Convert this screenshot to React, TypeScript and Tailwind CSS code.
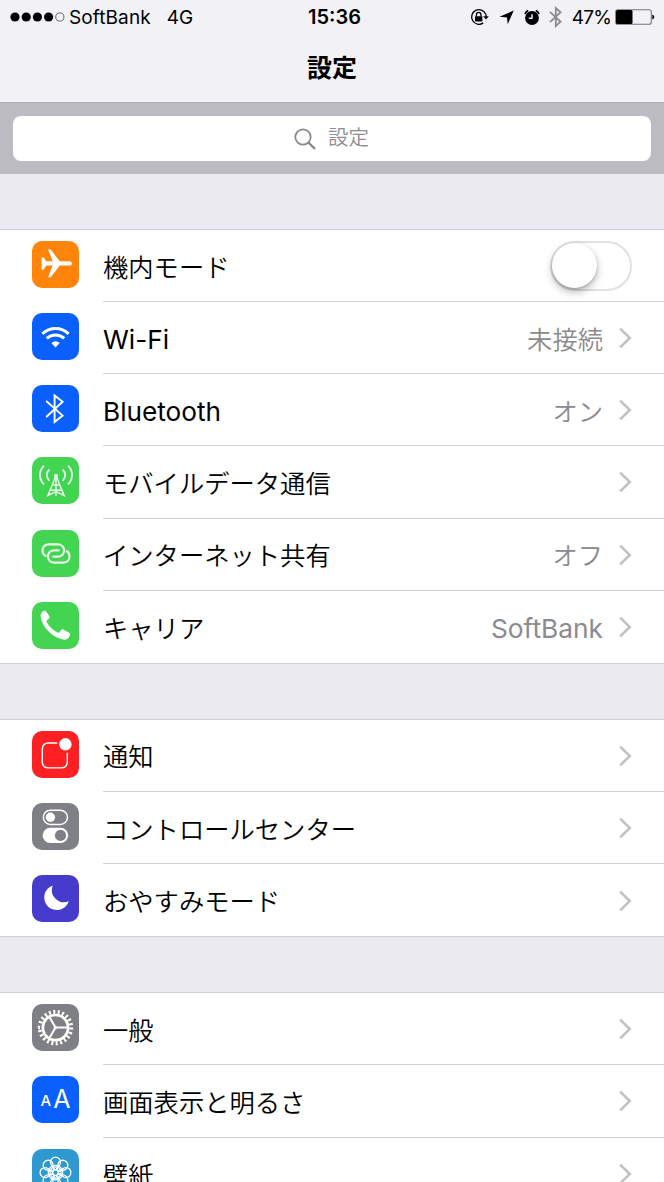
import type { ReactNode } from 'react'

interface SettingsItem {
  label: string
  color: string
  icon: ReactNode
  value?: string
  latin?: boolean
  toggle?: boolean
}

const PlaneIcon = () => (
  <path
    fill="#fff"
    d="M37.3 20.2c1.6 0 2.6 1 2.6 2.2s-1 2.2-2.6 2.2H27.8L18.7 36.2H16l4.8-11.6h-6.6l-2.6 4.2H9.6V16.2h2l2.6 4h6.6L16 8.5h2.7l9.1 11.7z"
  />
)

const WifiIcon = () => (
  <g fill="none" stroke="#fff" strokeWidth="3">
    <path d="M10.4 20.8a19 19 0 0 1 26.2 0" />
    <path d="M14.8 25.4a12.6 12.6 0 0 1 17.4 0" />
    <path d="M23.5 34.4l-4.2-4.5a6.1 6.1 0 0 1 8.4 0z" fill="#fff" stroke="none" />
  </g>
)

const BluetoothTileIcon = () => (
  <path d="M14.2 16l16.4 14.6-8 6.4V10.4l8 6.4-16.4 15.2" fill="none" stroke="#fff" strokeWidth="1.9" />
)

const CellularIcon = () => (
  <g fill="none" stroke="#fff" strokeWidth="1.4" opacity="0.9">
    <path d="M12 8.7C6.6 14 6.6 22.2 12 27.4M36 8.7c5.4 5.3 5.4 13.5 0 18.7" strokeWidth="1.8" />
    <path d="M17.5 12.4c-3.6 3.2-3.6 8.2 0 11.4M30.5 12.4c3.6 3.2 3.6 8.2 0 11.4" strokeWidth="1.8" />
    <path d="M24 18.5L15.8 39M24 18.5L32.2 39M24 18v21M20.3 28h7.4M18 33.3h12M18 33.3l-2.2 5.2 8.2-3.8 8.2 3.8-2.2-5.2" />
    <circle cx="24" cy="18.7" r="2" fill="#fff" stroke="none" />
  </g>
)

const HotspotIcon = () => (
  <g fill="none" stroke="#fff" strokeWidth="2.2" strokeLinecap="round" opacity="0.88">
    <path d="M13.6 26c-2-.9-3.1-3-3.1-5.4 0-3.6 2.5-6.2 6.3-6.2h8.8c3.8 0 6.4 2.5 6.4 6.1s-2.6 6.2-6.4 6.2h-4.4" />
    <path d="M34.4 21.1c2 .9 3.1 3 3.1 5.4 0 3.6-2.5 6.2-6.3 6.2h-8.8c-3.8 0-6.4-2.5-6.4-6.1s2.6-6.2 6.4-6.2h4.4" />
  </g>
)

const PhoneIcon = () => (
  <path
    fill="#fff"
    d="M10 10.2c1.5-1.5 3.3-2 4.2-.8l3 4.6c.7 1.2.4 2.2-.6 3l-1.700 1.300c-.5.5-.5 1.100-.1 1.900 2.600 4.400 6.400 8 10.700 10.200.9.400 1.500.3 2-.3l1.400-1.900c.7-.9 1.700-1.100 2.800-.5l5.500 3c1.300.8 1.200 2.300.1 4.100-1.300 2.200-3.400 3.300-6.300 2.800C20 35.300 10 24.500 8.700 15c-.3-2 .2-3.600 1.300-4.800z"
  />
)

const NotificationIcon = () => (
  <>
    <path
      d="M25.3 12H16.6c-4 0-6.3 2.3-6.3 6.3v12.3c0 4 2.3 6.3 6.3 6.3H29c4 0 6.3-2.3 6.3-6.3v-8.9"
      fill="none"
      stroke="#fff"
      strokeWidth="1.4"
    />
    <circle cx="33.4" cy="13.3" r="6.2" fill="#fff" />
  </>
)

const ControlCenterIcon = () => (
  <>
    <rect x="11.3" y="7.2" width="24.2" height="14.2" rx="7.1" fill="none" stroke="#fff" strokeWidth="1.5" />
    <circle cx="18.4" cy="14.3" r="4.7" fill="#fff" />
    <rect x="10.6" y="24.7" width="25.6" height="15.4" rx="7.7" fill="#fff" />
    <circle cx="28.5" cy="32.4" r="5.6" fill="#7f7f86" />
  </>
)

const MoonIcon = () => <path fill="#fff" d="M20.7 10.5A12.6 12.6 0 1 0 36.8 26.3A12.3 12.3 0 0 1 20.7 10.5z" />

const GearIcon = () => (
  <g fill="none" stroke="#fff">
    <circle cx="23.5" cy="23.6" r="12.6" strokeWidth="2.7" />
    <circle cx="23.5" cy="23.6" r="15.6" strokeWidth="4.2" pathLength="44" strokeDasharray="0.9 1.1" />
    <path d="M23.5 23.6H36M23.5 23.6L17.2 12.7M23.5 23.6L17.2 34.5" strokeWidth="2" />
    <circle cx="23.5" cy="23.6" r="1.8" fill="#fff" stroke="none" />
  </g>
)

const BrightnessIcon = () => (
  <div className="flex h-full items-baseline justify-center gap-[2px] font-['Inter'] leading-[46px] text-white">
    <span className="relative -top-[2px] text-[15px] font-medium">A</span>
    <span className="text-[25px]">A</span>
  </div>
)

const WallpaperIcon = () => (
  <g fill="none" stroke="#fff" strokeWidth="1.3">
    {[0, 45, 90, 135, 180, 225, 270, 315].map((angle) => (
      <g key={angle} transform={`rotate(${angle} 23.5 23.6)`}>
        <circle cx="23.5" cy="13.2" r="5" />
        <circle cx="23.5" cy="18.6" r="2.3" strokeWidth="1.1" />
      </g>
    ))}
    <circle cx="23.5" cy="23.6" r="3" />
  </g>
)

const groups: SettingsItem[][] = [
  [
    { label: '機内モード', color: 'bg-[#ff8408]', icon: <PlaneIcon />, toggle: true },
    { label: 'Wi-Fi', color: 'bg-[#0a60ff]', icon: <WifiIcon />, value: '未接続', latin: true },
    { label: 'Bluetooth', color: 'bg-[#0a60ff]', icon: <BluetoothTileIcon />, value: 'オン', latin: true },
    { label: 'モバイルデータ通信', color: 'bg-[#43d551]', icon: <CellularIcon /> },
    { label: 'インターネット共有', color: 'bg-[#43d551]', icon: <HotspotIcon />, value: 'オフ' },
    { label: 'キャリア', color: 'bg-[#43d551]', icon: <PhoneIcon />, value: 'SoftBank' },
  ],
  [
    { label: '通知', color: 'bg-[#ff2024]', icon: <NotificationIcon /> },
    { label: 'コントロールセンター', color: 'bg-[#7f7f86]', icon: <ControlCenterIcon /> },
    { label: 'おやすみモード', color: 'bg-[#473bcd]', icon: <MoonIcon /> },
  ],
  [
    { label: '一般', color: 'bg-[#7f7f86]', icon: <GearIcon /> },
    { label: '画面表示と明るさ', color: 'bg-[#0a60ff]', icon: null },
    { label: '壁紙', color: 'bg-[#2f98d0]', icon: <WallpaperIcon /> },
  ],
]

const StatusBar = () => (
  <div className="grid h-[34px] grid-cols-[1fr_auto_1fr] items-center text-[19px] leading-none">
    <div className="flex items-center pl-[10px]">
      <svg width="56" height="10" viewBox="0 0 56 10">
        {[5, 16.2, 27.4, 38.6].map((cx) => (
          <circle key={cx} cx={cx} cy="5" r="4.6" />
        ))}
        <circle cx="49.8" cy="5" r="4.1" fill="none" stroke="#555" strokeWidth="0.9" />
      </svg>
      <span className="ml-[3px] tracking-[0.1px]">SoftBank</span>
      <span className="ml-[16px]">4G</span>
    </div>
    <span className="pl-[5px] text-[20px] font-semibold">15:36</span>
    <div className="flex items-center justify-end pr-[9px]">
      <svg width="19" height="18" viewBox="0 0 19 18">
        <path d="M15.7 6.2A7.3 7.3 0 1 0 13.2 14.9" fill="none" stroke="#000" strokeWidth="1.3" />
        <path d="M15.7 6.2q.5 1.2.5 2.6" fill="none" stroke="#000" strokeWidth="1.3" />
        <path d="M13.2 8.3h5.6L16 11.6z" />
        <rect x="5" y="8.2" width="7.4" height="5.2" rx="0.6" />
        <path d="M6.4 8.5V6.7a2.3 2.3 0 0 1 4.6 0v1.8" fill="none" stroke="#000" strokeWidth="1.3" />
      </svg>
      <svg className="ml-[10px]" width="15" height="15" viewBox="0 0 15 15">
        <path d="M14.7.5L8.7 14.3 8 7.5.5 6.8z" />
      </svg>
      <svg className="ml-[10px]" width="16" height="17" viewBox="0 0 16 17">
        <circle cx="8" cy="9" r="6.9" />
        <path d="M.9 4.8A8.6 8.6 0 0 1 4.2 1.5M15.1 4.8a8.6 8.6 0 0 0-3.3-3.3" fill="none" stroke="#000" strokeWidth="1.7" />
        <path d="M8 5.2v4.1H4.8" fill="none" stroke="#f2f1f6" strokeWidth="1.4" />
      </svg>
      <svg className="ml-[9px]" width="14" height="22" viewBox="0 0 14 22">
        <path d="M1 5.8l10.6 10L6.8 20V2l4.8 4.2L1 16.2" fill="none" stroke="#8b8b90" strokeWidth="1.8" />
      </svg>
      <span className="ml-[9px] tracking-[-0.8px]">47%</span>
      <svg className="ml-[4px]" width="40" height="16" viewBox="0 0 40 16">
        <rect x="0.7" y="0.7" width="35.6" height="14.6" rx="2" fill="none" stroke="#77777b" strokeWidth="1.1" />
        <rect x="1" y="1" width="16.5" height="14" rx="1.5" />
        <path d="M37.3 5.5q2 .6 2 2.5t-2 2.5z" />
      </svg>
    </div>
  </div>
)

const Toggle = () => (
  <div className="mr-8 h-[50px] w-[82px] rounded-full border-[2.5px] border-[#e1e1e4] bg-white">
    <div className="h-[45px] w-[45px] rounded-full bg-white shadow-[0_4px_8px_rgba(0,0,0,0.28),0_1px_2px_rgba(0,0,0,0.22)]" />
  </div>
)

const Chevron = () => (
  <svg className="mt-px mr-8 ml-4" width="13" height="22" viewBox="0 0 13 22">
    <path d="M1.2 1.7L10.8 11 1.2 20.3" fill="none" stroke="#c0c0c5" strokeWidth="2.5" />
  </svg>
)

const SettingsRow = ({ item, last }: { item: SettingsItem; last: boolean }) => (
  <div className="flex h-[72.15px] pl-8">
    <div className={`mt-[11px] h-[47px] w-[47px] shrink-0 overflow-hidden rounded-[10px] ${item.color}`}>
      {item.icon ? (
        <svg width="47" height="47" viewBox="0 0 47 47">
          {item.icon}
        </svg>
      ) : (
        <BrightnessIcon />
      )}
    </div>
    <div className={`ml-6 flex min-w-0 flex-1 items-center ${last ? '' : 'border-b border-[#d3d3d7]'}`}>
      <span className={`flex-1 pt-[4px] whitespace-nowrap ${item.latin ? 'text-[26.2px]' : 'font-[350]'}`}>
        {item.label}
      </span>
      {item.value && (
        <span className={`pt-[4px] text-[#8a8a8f] ${item.value === 'SoftBank' ? 'text-[26.3px]' : 'font-[350]'}`}>
          {item.value}
        </span>
      )}
      {item.toggle ? <Toggle /> : <Chevron />}
    </div>
  </div>
)

export default function App() {
  return (
    <main className="h-[1182px] w-[664px] overflow-hidden bg-[#ebeaf1] font-['Inter','Noto_Sans_CJK_JP',sans-serif] text-black">
      <header className="h-[103px] border-b border-[#b2b1b7] bg-[#f2f1f6]">
        <StatusBar />
        <h1 className="pt-[15px] text-center text-[25px] leading-[38px] font-bold">設定</h1>
      </header>
      <div className="h-[71px] bg-[#bcbbc2] px-[13px] pt-[13px]">
        <div className="flex h-[45px] items-center justify-center gap-[12px] rounded-lg bg-white text-[20.5px] text-[#8e8e93]">
          <svg className="-ml-px" width="22" height="22" viewBox="0 0 22 22">
            <circle cx="9" cy="9" r="7.7" fill="none" stroke="#85858b" strokeWidth="1.7" />
            <path d="M14.5 14.5L21 21" stroke="#85858b" strokeWidth="2.3" />
          </svg>
          <span className="leading-none font-[350]">設定</span>
        </div>
      </div>
      <div className="flex flex-col gap-[55px] pt-[55px] text-[25.3px] leading-[38px]">
        {groups.map((group, index) => (
          <section key={index} className="border-y border-[#cfced6] bg-white">
            {group.map((item, i) => (
              <SettingsRow key={item.label} item={item} last={i === group.length - 1} />
            ))}
          </section>
        ))}
      </div>
    </main>
  )
}
